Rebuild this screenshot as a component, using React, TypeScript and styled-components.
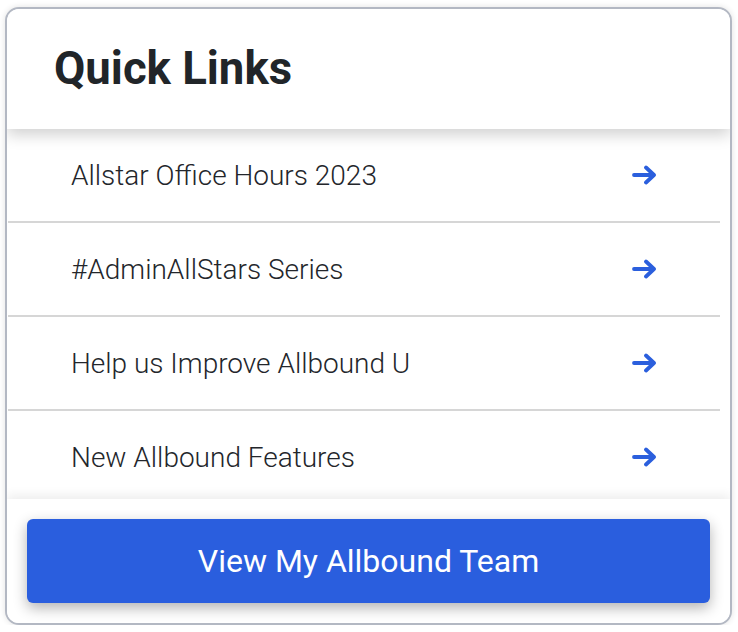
import React from "react";
import styled, { createGlobalStyle } from "styled-components";

const Global = createGlobalStyle`
  html, body { margin: 0; padding: 0; background: #ffffff; }
  body { font-family: Roboto, "Noto Sans", Arial, sans-serif; }
  * { box-sizing: border-box; }
`;

const Page = styled.div`
  padding: 7px 6px 0 5px;
  width: 738px;
`;

const Card = styled.section`
  width: 727px;
  height: 618px;
  border: 2px solid #b3b8c3;
  border-radius: 14px;
  background: #ffffff;
  box-shadow: 0 0 6px rgba(0, 0, 0, 0.12);
  overflow: hidden;
  display: flex;
  flex-direction: column;
`;

const Header = styled.header`
  position: relative;
  z-index: 2;
  height: 120px;
  flex: none;
  display: flex;
  align-items: center;
  padding-left: 47px;
  background: #ffffff;
  box-shadow: 0 6px 14px rgba(0, 0, 0, 0.18);
`;

const Title = styled.h2`
  margin: 0;
  padding-bottom: 2px;
  font-family: Roboto, Arial, sans-serif;
  font-weight: 700;
  font-size: 45.5px;
  color: #212529;
  letter-spacing: 0;
`;

const List = styled.ul`
  list-style: none;
  margin: 0 10px 0 1px;
  padding: 0;
  flex: 1;
  overflow: hidden;
`;

const Row = styled.li`
  height: 94px;
  border-bottom: 2px solid #d6d6d6;
  display: flex;
  align-items: center;
  justify-content: space-between;
  padding: 0 62px 0 63px;
`;

const Label = styled.span`
  font-family: Roboto, Arial, sans-serif;
  font-weight: 300;
  font-size: 28px;
  color: #23262b;
`;

const Arrow = styled.svg`
  width: 26px;
  height: 20px;
  color: #2b5fdd;
  flex: none;
`;

const Footer = styled.footer`
  position: relative;
  z-index: 2;
  flex: none;
  height: 124px;
  padding: 20px 20px 18px 20px;
  background: #ffffff;
  box-shadow: 0 -4px 10px rgba(0, 0, 0, 0.07);
`;

const Button = styled.button`
  width: 100%;
  height: 84px;
  border: none;
  border-radius: 6px;
  background: #2a5ede;
  color: #ffffff;
  font-family: Roboto, Arial, sans-serif;
  font-weight: 400;
  font-size: 32px;
  box-shadow: 0 5px 14px rgba(0, 0, 0, 0.3);
  cursor: pointer;
`;

const links = [
  "Allstar Office Hours 2023",
  "#AdminAllStars Series",
  "Help us Improve Allbound U",
  "New Allbound Features",
];

const ArrowIcon = () => (
  <Arrow viewBox="0 0 26 20" fill="none">
    <path
      d="M2 10 H22 M14 2.5 L22 10 L14 17.5"
      stroke="currentColor"
      strokeWidth="3.8"
      strokeLinecap="round"
      strokeLinejoin="round"
    />
  </Arrow>
);

export default function App() {
  return (
    <>
      <Global />
      <Page>
        <Card>
          <Header>
            <Title>Quick Links</Title>
          </Header>
          <List>
            {links.map((l) => (
              <Row key={l}>
                <Label>{l}</Label>
                <ArrowIcon />
              </Row>
            ))}
          </List>
          <Footer>
            <Button>View My Allbound Team</Button>
          </Footer>
        </Card>
      </Page>
    </>
  );
}
